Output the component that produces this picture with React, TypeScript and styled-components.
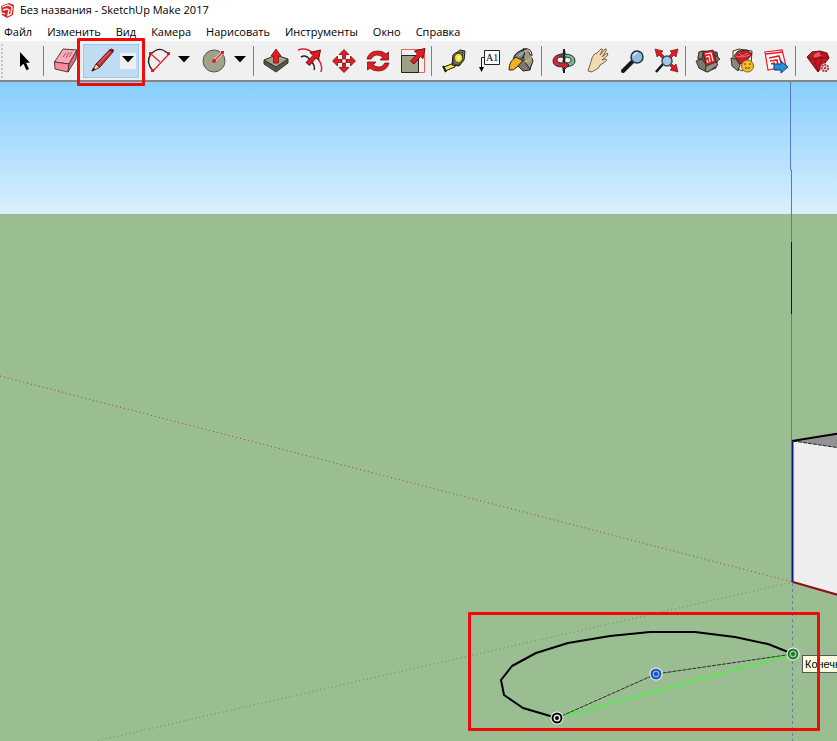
import React from "react";
import styled, { createGlobalStyle } from "styled-components";

const GlobalStyle = createGlobalStyle`
  * { box-sizing: border-box; }
  body { margin: 0; overflow: hidden; }
  button { margin: 0; border: 0; padding: 0; background: none; font: inherit; color: inherit; }
`;

const RED = "#e41b23";
const MARK = "#f00a0a";
const INK = "#1c1416";

const Window = styled.div`
  display: flex;
  flex-direction: column;
  height: 100vh;
  overflow: hidden;
  background: #fff;
  color: #000;
  font: 11px/16px "Open Sans", "Noto Sans", sans-serif;
`;

const TitleBar = styled.header`
  display: flex;
  align-items: center;
  gap: 5px;
  height: 22px;
  padding-bottom: 2px;
  padding-left: 1px;
  white-space: nowrap;
`;

const Title = styled.h1`
  margin: 0;
  font: inherit;
`;

const MenuBar = styled.nav`
  display: flex;
  gap: 15px;
  height: 19px;
  padding: 0 4px;
`;

const MenuItem = styled.button`
  height: 19px;
  line-height: 19px;
  white-space: nowrap;
`;

const ToolBar = styled.div`
  display: flex;
  align-items: center;
  flex: none;
  height: 41px;
  padding-top: 1px;
  background: #f0f0f0;
  border-bottom: 2px solid #858585;
`;

const Grip = styled.span`
  flex: none;
  width: 6px;
  height: 34px;
  margin-left: 1px;
  border-left: 2px dotted #c8c8c8;
`;

const Separator = styled.span`
  flex: none;
  width: 1px;
  height: 30px;
  margin: 0 5px 0 2px;
  background: #808080;
`;

const ToolButton = styled.button`
  display: block;
  flex: none;
  width: 34px;
  height: 34px;
`;

const SplitTool = styled.div<{ $active?: boolean }>`
  position: relative;
  display: flex;
  flex: none;
  align-items: center;
  justify-content: space-between;
  width: 56px;
  height: 34px;
  padding-right: 3px;
  background: ${(p) => (p.$active ? "#c0dcf3" : "none")};
  box-shadow: ${(p) => (p.$active ? "inset 0 0 0 1px #90c8f6" : "none")};
`;

const CaretButton = styled.button<{ $active?: boolean }>`
  display: flex;
  align-items: center;
  justify-content: center;
  width: 16px;
  height: 16px;
  padding-bottom: 3px;
  background: ${(p) => (p.$active ? "#f0f0f0" : "none")};
`;

const ToolMark = styled.span`
  position: absolute;
  z-index: 2;
  inset: -6px -6px -8px;
  border: 3px solid ${MARK};
  border-radius: 1px;
  pointer-events: none;
`;

const Viewport = styled.main`
  position: relative;
  flex: 1;
  overflow: hidden;
  background: linear-gradient(#87cefc, #b0dffe 50%, #daf0fe) top / 100% 132px no-repeat #9bbd92;
`;

const Drawing = styled.svg`
  display: block;
  width: 100%;
  height: 100%;
`;

const Hint = styled.div`
  position: absolute;
  left: 802px;
  top: 573px;
  height: 18px;
  padding: 0 2px;
  border: 1px solid #555;
  background: #ffffe1;
  font: 11px/17px "Liberation Sans", Arial, sans-serif;
  white-space: nowrap;
`;

const AreaMark = styled.div`
  position: absolute;
  left: 468px;
  top: 530px;
  width: 352px;
  height: 119px;
  border: 3px solid ${MARK};
  border-radius: 1px;
  pointer-events: none;
`;

const Glyph = styled.svg`
  display: block;
  width: 34px;
  height: 34px;
`;

const Caret = () => (
  <svg width="12" height="7" viewBox="0 0 12 7" aria-hidden="true">
    <path d="M0 0h12L6 6.500z" fill="#000" />
  </svg>
);

const RED_ARROW = "M-5.500 3L1.500-4L-1.500-7L9-9.500L7 .5L4.500-1.500L-2 6z";

const icons: Record<string, React.ReactNode> = {
  select: <path d="M13 8v15l3.500-3.200 3 6.500 2.500-1.200-3-6.300h4z" fill="#000" />,
  eraser: (
    <g stroke="#4b2a33" strokeWidth=".9" strokeLinejoin="round">
      <path d="M5.500 18L14 5l14 1-8 14z" fill="#f9a9b7" />
      <path d="M5.500 18l14.500 2-1 8-13-3z" fill="#fb8ba1" />
      <path d="M28 6l-1 9-8 13 1-8z" fill="#dd7088" />
      <path d="M14 13l3-4M17 14l3-6m0 5l3-5" stroke="#a34e68" fill="none" />
    </g>
  ),
  pencil: (
    <g stroke="#4a1518" strokeWidth=".9" strokeLinejoin="round">
      <path d="M13 20L26.500 6l3.500 2L16.500 23.500z" fill="#cf2a30" />
      <path d="M15.500 20L27.500 7.500" stroke="#f08078" />
      <path d="M13 20l3.500 3.500L9 27z" fill="#efe0a5" />
      <path d="M10.500 24L9 27l3-1.500z" fill="#000" />
      <path d="M26.500 6l2-1 2 1-.5 2z" fill="#a02a2a" />
    </g>
  ),
  arc: (
    <g fill="none">
      <path d="M12 10Q20 2 27 8l3 2M12 10Q6 18 14 27" stroke="#222" strokeWidth="1.300" />
      <path d="M30 10L14 27M12 10l9 8" stroke={RED} strokeWidth="1.200" />
      <path d="M10 8h3v3h-3zM28 8h3v3h-3zM12 25h3v3h-3z" fill={RED} />
    </g>
  ),
  circle: (
    <g>
      <circle cx="19" cy="17" r="11" fill="#a2a18a" stroke="#55564a" />
      <path d="M19 17l8-8" stroke="#f8dcd0" strokeWidth="3" />
      <path d="M19 17l8-8" stroke={RED} strokeWidth="1.200" />
      <circle cx="19" cy="17" r="2" fill={RED} />
      <path d="M26 7h3v3h-3z" fill={RED} />
    </g>
  ),
  push: (
    <g stroke="#33332b" strokeLinejoin="round">
      <path d="M5 16v4l12 8 12-9v-4L17 23z" fill="#55574c" />
      <path d="M5 16l12-5 12 4-12 8z" fill="#a1a28b" />
      <path d="M14.500 19v-7H12l5-7 5 7h-2.500v7z" fill={RED} stroke="#7a1014" strokeWidth=".8" />
    </g>
  ),
  offset: (
    <g fill="none">
      <path d="M5 6Q14 3 21 10Q31 20 28 28" stroke={RED} strokeWidth="1.500" />
      <path d="M8 13Q13 10 17 16Q23 22 21 26" stroke="#222" strokeWidth="1.500" />
      <path d={RED_ARROW} transform="translate(18.500 15.500)" fill={RED} stroke="#641216" />
    </g>
  ),
  move: (
    <g fill={RED} stroke="#75151a" strokeWidth=".8">
      {[0, 90, 180, 270].map((a) => (
        <path key={a} transform={`rotate(${a} 17 17)`} d="M15.500 15v-4.500H12L17 5.500l5 5H18.500V15z" />
      ))}
      <path d="M16 16h2v2h-2z" fill="#fff" stroke="none" />
    </g>
  ),
  rotate: (
    <g fill={RED} stroke="#75151a" strokeWidth=".8">
      {[0, 180].map((a) => (
        <path key={a} transform={`rotate(${a} 17 17)`} d="M6 15Q8 7 17 7q5 0 8 3l2.500-2v8H19l3-3q-8-5-12 2z" />
      ))}
    </g>
  ),
  scale: (
    <g>
      <path d="M6.500 5.500h23v23h-23z" fill="none" stroke="#ee5b5f" />
      <path d="M6.500 11.500h17v17h-17z" fill="#9f9f88" stroke="#25251f" />
      <path d={RED_ARROW} transform="translate(21 14)" fill={RED} stroke="#641216" />
    </g>
  ),
  tape: (
    <g stroke="#191a10" strokeLinejoin="round">
      <path d="M17 19l1 4-10 4-1-4z" fill="#f5e832" />
      <path d="M6 22l3 6" strokeWidth="2" />
      <path d="M16 11l7-5 5 1-1 9-5 6-7-1z" fill="#8b8c80" />
      <path d="M16 11l2-2 8-1-1 9-3 4-6-1z" fill="#6b6d62" strokeWidth=".6" />
      <ellipse cx="21.500" cy="14" rx="4" ry="4.500" fill="#f4e52a" strokeWidth=".6" />
      <ellipse cx="22" cy="14" rx="1.500" ry="2" fill="#fff38d" stroke="none" />
    </g>
  ),
  text: (
    <g>
      <path d="M13.500 6.500h15v14h-15z" fill="#fff" stroke="#222" />
      <path d="M13 13.500h-2.500v10" fill="none" stroke="#222" />
      <path d="M8 23h5L10.500 28z" />
      <text x="15" y="17" fontFamily="Liberation Serif, serif" fontSize="10">A1</text>
    </g>
  ),
  paint: (
    <g stroke="#29241d" strokeLinejoin="round">
      <path d="M10 11l8-6 9 11-2 10-7 1-8-8z" fill="#7b796b" />
      <path d="M18 5q6-1 10 12l-3 8-6-8z" fill="#a3997d" />
      <ellipse cx="14" cy="12" rx="3.500" ry="7" transform="rotate(48 14 12)" fill="#719390" />
      <path d="M11 13Q4 17 4 26q5 1 8-3 3-4 6-6z" fill="#f3b020" />
      <path d="M14 12Q24 2 27 10q0 7-8 8" fill="none" stroke="#d2c4a2" />
      <path d="M18 5Q27 3 27 12" fill="none" />
    </g>
  ),
  orbit: (
    <g stroke="#202020" strokeWidth=".9" strokeLinejoin="round">
      <path d="M17 10q11 0 11 7 0 5-9 6v-4q5 0 5-3t-7-3z" fill="#72bc91" />
      <path d="M18 13v3l-5-4.500L18 7v3" fill="#72bc91" />
      <path d="M15 10Q6 11 6 17q0 6 10 6v4l6-6-6-5v3q-6 0-6-3t5-3z" fill="#ce2b37" />
      <path d="M17 5v24" strokeWidth="2" />
      <path d="M12 20.500h4v-2.500l4 3-4 3v-2q-2 0-4-1.500" fill={RED} stroke="none" />
    </g>
  ),
  pan: (
    <path
      d="M7 28l2-6 2-7q2-5 5-5l4-4q2-1 1 2l-2 4 5-6q2-1 1 2l-4 6 5-4q2 0 0 3l-5 4 4-1q2 1-1 3l-5 3q-1 4-5 5l-3 2z"
      transform="translate(0 -1)"
      fill="#f2dbb1"
      stroke="#786347"
    />
  ),
  zoom: (
    <g>
      <path d="M17 18L8 27" stroke="#15191d" strokeWidth="4" strokeLinecap="round" />
      <circle cx="22" cy="13" r="6" fill="#8dbce0" stroke="#293540" strokeWidth="1.500" />
      <path d="M18.500 12q1-3 4-3" fill="none" stroke="#d6eafa" strokeWidth="1.500" />
    </g>
  ),
  extents: (
    <g>
      <path d="M14 20l-7 8" stroke="#15191d" strokeWidth="2.500" />
      <circle cx="18" cy="17" r="5" fill="#9fc8e8" stroke="#354c60" strokeWidth="1.500" />
      <g fill={RED} stroke="#76161a" strokeWidth=".7">
        <path d="M6 5l8 2-2 2 3 3-2 2-3-3-2 2z" />
        <path d="M29 5l-8 2 2 2-3 3 2 2 3-3 2 2z" />
        <path d="M29 28l-8-2 2-2-2-2 2-2 2 2 2-2z" />
      </g>
    </g>
  ),
  warehouse: (
    <g stroke="#37322d" strokeWidth=".9" strokeLinejoin="round">
      <path d="M8 8l4-1 14 1 1 6-2 10-9 4-8-4-1-10z" fill="#59564d" />
      <path d="M8 8l4-1-1 8-4-1z" fill="#8a8674" />
      <path d="M12 8l10-2 3 12-10 4z" fill={RED} />
      <path d="M14 10l6-1 2 8M15 13l3-1 1 6M16 16l1 3" fill="none" stroke="#fff" strokeWidth="1.200" />
      <path d="M5 17l6-2 4 6-1 6-6-3z" fill="#7d7969" />
      <path d="M24 11l5 4-4 3z" fill="#7d7969" />
      <path d="M15 22l10-4 2 3-10 7-3-1z" fill="#918d79" />
    </g>
  ),
  extensions: (
    <g stroke="#27221f" strokeWidth=".9" strokeLinejoin="round">
      <path d="M8 7l6-2 13 2-1 14-9 6-9-5z" fill="#f3f1e9" />
      <path d="M9 12l4-5 9-1 5 4-7 9-5 1z" fill="#c31e28" />
      <path d="M13 8l4 4 6-3M10 12l8 1 7-2" fill="none" stroke="#ef7b7c" />
      <path d="M6 14l5 1 4 6-2 6-6-5z" fill="#8c8775" />
      <circle cx="22.500" cy="22" r="6" fill="#f4bd28" stroke="#83500e" />
      <path d="M19 20h2m3 0h2M20 24.500l2-1 1 1 2-1" stroke="#4b3000" fill="none" />
    </g>
  ),
  layout: (
    <g>
      <path d="M6 8l17-2 4 16-18 4z" fill="#fff" stroke={RED} strokeWidth="1.200" />
      <path d="M10 14l10-2 3 9M11 17l7-1 1 6M12 20l3-1 1 4M7 10l17-2" fill="none" stroke={RED} strokeWidth="1.600" />
      <path d="M15 20h7v-3l7 6-7 6v-3h-7z" fill="#278ed9" stroke="#153f70" />
    </g>
  ),
  ruby: (
    <g stroke="#64151b" strokeLinejoin="round">
      <path d="M6 13l5-5 8-1 7 2 2 5-11 14z" fill="#c41822" />
      <path d="M6 13l7 2 8-1 7 0-7-6-8 7 4 13 4-14M11 8l10 6" fill="none" stroke="#79101a" strokeWidth=".8" />
      <path d="M13 10l5-2 2 4-7 2z" fill="#e9585c" stroke="none" />
      <circle cx="24" cy="24" r="4.500" fill="#f0f0f0" stroke="none" />
      <circle cx="24" cy="24" r="3.200" fill="#f3d9d6" stroke="#b13c45" strokeWidth="2" strokeDasharray="2 .8" />
      <circle cx="24" cy="24" r="1.200" fill="#b13c45" stroke="none" />
    </g>
  ),
};

const Icon = ({ name }: { name: string }) => (
  <Glyph viewBox="0 0 34 34" aria-hidden="true">{icons[name]}</Glyph>
);

const Tool = ({ name, label }: { name: string; label: string }) => (
  <ToolButton type="button" aria-label={label}><Icon name={name} /></ToolButton>
);

const Split = ({ name, label, active }: { name: string; label: string; active?: boolean }) => (
  <SplitTool $active={active}>
    <Tool name={name} label={label} />
    <CaretButton type="button" $active={active} aria-label={`${label}: варианты`}><Caret /></CaretButton>
    {active && <ToolMark />}
  </SplitTool>
);

const menus = ["Файл", "Изменить", "Вид", "Камера", "Нарисовать", "Инструменты", "Окно", "Справка"];

const groups: [string, string][][] = [
  [["push", "Вдавить/Вытянуть"], ["offset", "Смещение"], ["move", "Переместить"], ["rotate", "Повернуть"], ["scale", "Масштаб"]],
  [["tape", "Рулетка"], ["text", "Текст"], ["paint", "Заливка"]],
  [["orbit", "Орбита"], ["pan", "Панорама"], ["zoom", "Лупа"], ["extents", "В размер окна"]],
  [["warehouse", "3D Warehouse"], ["extensions", "Extension Warehouse"], ["layout", "LayOut"]],
  [["ruby", "Менеджер расширений"]],
];

const Handle = ({ x, y, color, fill }: { x: number; y: number; color: string; fill: string }) => (
  <g transform={`translate(${x} ${y})`}>
    <circle r="6.500" fill="#fff" />
    <circle r="4.500" fill={fill} stroke={color} strokeWidth="2" />
    <circle r="2" fill={color} />
  </g>
);

const Scene = () => (
  <Drawing aria-label="Модель">
    <g transform="translate(0 -82)" fill="none">
      <path d="M0 376L793 582" stroke="#99402b" strokeDasharray="1 3" />
      <path d="M793 582L96 741" stroke="#459c4a" strokeDasharray="1 3" />
      <path d="M792.500 583V1400" stroke="#68819a" strokeDasharray="3 3" />
      <path d="M793 441L1233 371V521z" fill="#929292" />
      <path d="M793 441L1233 506V713L793 582z" fill="#eee" />
      <path d="M793 441L1233 506" stroke="#222" strokeDasharray="4 1" />
      <path d="M792 441L1233 371" stroke="#000" strokeWidth="2" />
      <path d="M793 582L1233 708" stroke="#8c0e16" strokeWidth="2" />
      <path d="M790.500 82V170H791.500V441" stroke="#5478cc" />
      <path d="M791.500 242V314" stroke="#090d65" />
      <path d="M792.500 441V582" stroke="#14148a" strokeWidth="2" />
      <path d="M557 718L793 654" stroke="#4cf044" strokeWidth="2" strokeDasharray="4 1" />
      <path d="M557 718L656 674L793 654" stroke="#263021" strokeDasharray="4 1" />
      <path
        d="M557 718L523 708L504 695L501 680L512 666L536 653L568 643L610 636L650 632L695 632L735 637L768 644L793 654"
        stroke="#000"
        strokeWidth="2"
        strokeLinejoin="round"
      />
      <Handle x={557} y={718} color="#000" fill="#e8eee6" />
      <Handle x={656} y={674} color="#1551b5" fill="#73adf3" />
      <Handle x={793} y={654} color="#20742b" fill="#91ca8b" />
    </g>
  </Drawing>
);

export default function App() {
  return (
    <>
      <GlobalStyle />
      <Window>
        <TitleBar>
          <svg width="14" height="16" viewBox="0 0 14 16" aria-hidden="true">
            <path d="M0 4l8-3 5 2-1 10-6 3-5-3z" fill="#df2428" />
            <path d="M1 5l6-2 4 2-1 7-4 2M2 8l4-1 2 1-1 5M1 11l3 1" fill="none" stroke="#fff" strokeWidth="1.300" />
          </svg>
          <Title>Без названия - SketchUp Make 2017</Title>
        </TitleBar>
        <MenuBar>
          {menus.map((m) => <MenuItem key={m} type="button">{m}</MenuItem>)}
        </MenuBar>
        <ToolBar role="toolbar" aria-label="Инструменты">
          <Grip />
          <Tool name="select" label="Выбрать" />
          <Separator />
          <Tool name="eraser" label="Ластик" />
          <Split name="pencil" label="Линия" active />
          <Split name="arc" label="Дуга" />
          <Split name="circle" label="Круг" />
          {groups.map((g) => (
            <React.Fragment key={g[0][0]}>
              <Separator />
              {g.map(([name, label]) => <Tool key={name} name={name} label={label} />)}
            </React.Fragment>
          ))}
        </ToolBar>
        <Viewport>
          <Scene />
          <Hint role="tooltip">Конечная точка</Hint>
          <AreaMark />
        </Viewport>
      </Window>
    </>
  );
}
